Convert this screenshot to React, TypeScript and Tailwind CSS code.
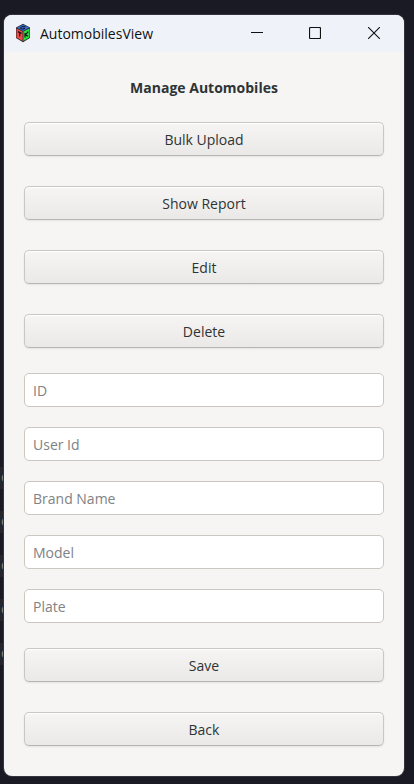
import type { ReactNode } from "react";

const fields = [
  { id: "automobile-id", label: "ID" },
  { id: "user-id", label: "User Id" },
  { id: "brand-name", label: "Brand Name" },
  { id: "model", label: "Model" },
  { id: "plate", label: "Plate" },
];

const backdropRows = [0, 1, 2, 3, 4];

function ActionButton({ children }: { children: ReactNode }) {
  return (
    <button
      type="button"
      className="h-[34px] w-full rounded-[5px] border border-[#cac7c3] border-b-[#b8b4af] bg-linear-to-b from-[#f6f5f3] to-[#eae9e7] pt-0.5 text-center text-[14px] leading-5 text-[#2e3436] shadow-[0_1px_2px_rgba(0,0,0,0.08),inset_0_1px_0_#ffffff]"
    >
      {children}
    </button>
  );
}

function TkIcon() {
  return (
    <svg className="h-5 w-4" viewBox="0 0 16 20" aria-hidden="true">
      <path d="M8 .8 15 4.5V15L8 19.2 1 15V4.5Z" fill="#23262c" />
      <path d="M8 1.6 14.2 4.8 8 7.9 1.8 4.8Z" fill="#3a6cc8" />
      <path d="M1.5 5.6 7.6 8.6V18L1.5 14.6Z" fill="#f04a46" />
      <path d="M14.5 5.6 8.4 8.6V18L14.5 14.6Z" fill="#2bdc40" />
      <path d="M10.4 3.8Q8 2.8 6 4.2T7.5 6.2L10 5.4H8" fill="none" stroke="#10182a" />
      <path d="M2.8 8.6 6.6 10.4M4.7 9.6V13.6" fill="none" stroke="#16181c" strokeWidth="1.2" />
      <path d="M10 10V14.6M13.2 8.6 10.4 12 13.2 13.2" fill="none" stroke="#16181c" strokeWidth="1.2" />
    </svg>
  );
}

function TitleBar() {
  const control = "flex h-9 items-center justify-center";
  return (
    <header className="flex h-[37px] items-start bg-[#eff3f9] pl-[11px]">
      <div className="flex h-9 flex-1 items-center gap-[9px]">
        <TkIcon />
        <span className="pt-0.5 text-[14px] leading-5 text-[#111111]">AutomobilesView</span>
      </div>
      <button type="button" aria-label="Minimize" className={`${control} w-[58px]`}>
        <svg width="12" height="12" viewBox="0 0 12 12">
          <path d="M0 5.5H12" stroke="#111" fill="none" />
        </svg>
      </button>
      <button type="button" aria-label="Maximize" className={`${control} w-[58px]`}>
        <svg width="12" height="12" viewBox="0 0 12 12">
          <rect x=".5" y=".5" width="11" height="11" rx="1" stroke="#111" strokeWidth="1.2" fill="none" />
        </svg>
      </button>
      <button type="button" aria-label="Close" className={`${control} w-[60px]`}>
        <svg width="12" height="12" viewBox="0 0 12 12">
          <path d="M0 0 12 12M12 0 0 12" stroke="#111" strokeWidth="1.1" fill="none" />
        </svg>
      </button>
    </header>
  );
}

export default function App() {
  return (
    <div className="relative min-h-screen overflow-hidden bg-[#191a24] pt-[15px] pr-[10px] pb-2 pl-1 font-['Open_Sans','Noto_Sans',sans-serif]">
      <div aria-hidden="true" className="absolute top-[467px] left-0 flex w-3 flex-col gap-[22px]">
        {backdropRows.map((row) => (
          <span key={row} className="h-[22px] bg-[#25252d] pl-px text-[14px] leading-5 text-[#858585]">
            c
          </span>
        ))}
      </div>
      <div className="relative overflow-hidden rounded-[8px] bg-[#f6f5f3] shadow-[0_0_0_1px_#34343c]">
        <TitleBar />
        <main className="px-5 pt-[26px] pb-[30px]">
          <h1 className="text-center text-[14px] leading-5 font-bold text-[#2e3436]">Manage Automobiles</h1>
          <div className="mt-6 flex flex-col gap-[30px]">
            <ActionButton>Bulk Upload</ActionButton>
            <ActionButton>Show Report</ActionButton>
            <ActionButton>Edit</ActionButton>
            <ActionButton>Delete</ActionButton>
          </div>
          <form className="mt-[25px]" onSubmit={(event) => event.preventDefault()}>
            <div className="flex flex-col gap-5">
              {fields.map((field) => (
                <input
                  key={field.id}
                  id={field.id}
                  type="text"
                  aria-label={field.label}
                  placeholder={field.label}
                  className="h-[34px] w-full rounded-[5px] border border-[#cdc7c2] bg-white px-2 text-[14px] leading-5 text-[#2e3436] placeholder:text-[#808284]"
                />
              ))}
            </div>
            <div className="mt-[25px] flex flex-col gap-[30px]">
              <ActionButton>Save</ActionButton>
              <ActionButton>Back</ActionButton>
            </div>
          </form>
        </main>
      </div>
    </div>
  );
}
